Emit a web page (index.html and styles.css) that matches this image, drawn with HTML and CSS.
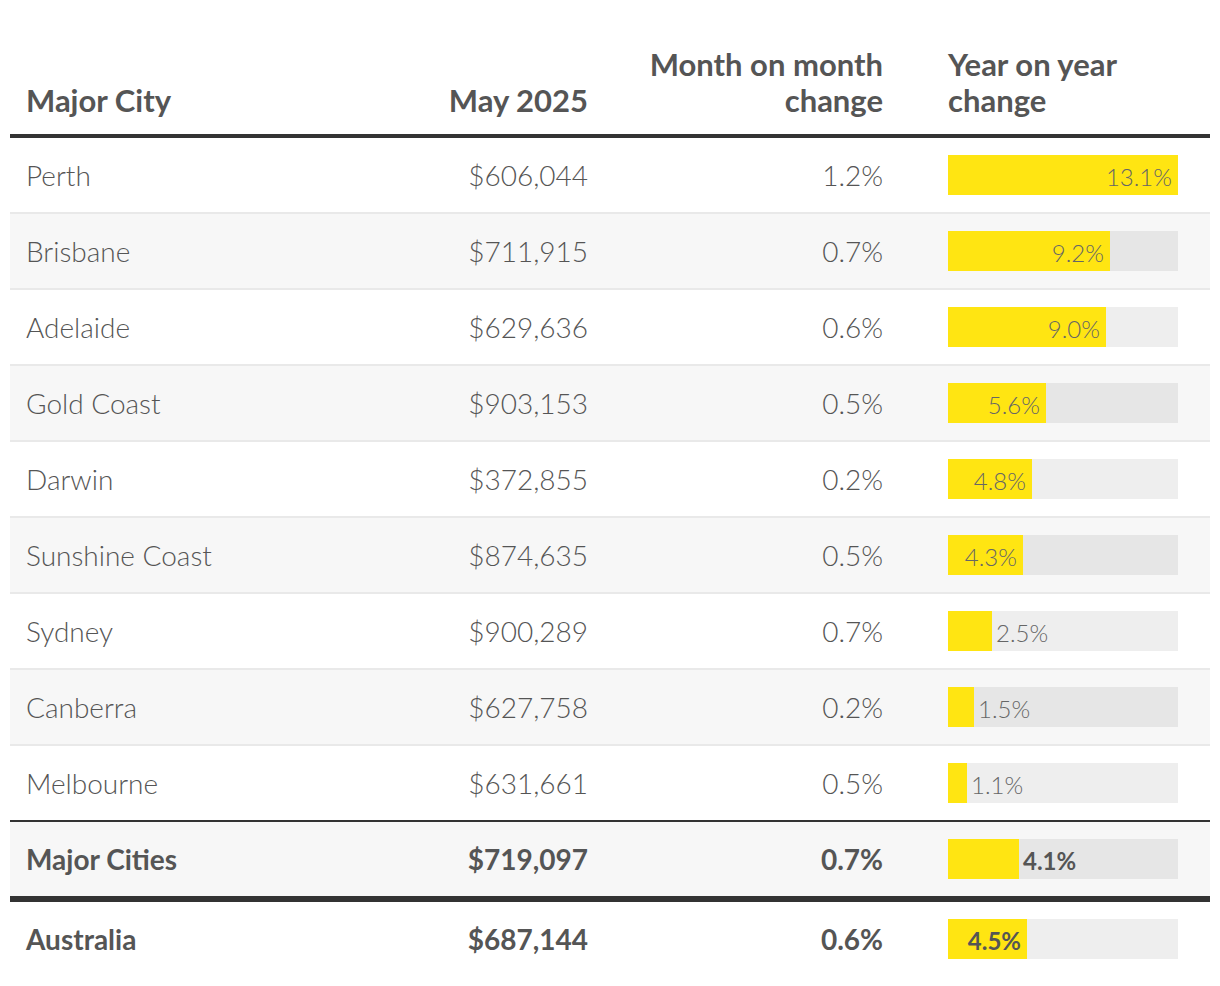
FILE: index.html
```html
<!DOCTYPE html>
<html lang="en">
<head>
<meta charset="utf-8">
<title>Major City prices</title>
<link rel="stylesheet" href="styles.css">
</head>
<body>
<div class="table">
  <div class="row head">
    <div class="c-name">Major City</div>
    <div class="c-num">May 2025</div>
    <div class="c-num">Month on month<br>change</div>
    <div class="c-bar-h">Year on year<br>change</div>
  </div>

  <div class="row">
    <div class="c-name">Perth</div><div class="c-num">$606,044</div><div class="c-num">1.2%</div>
    <div class="c-bar"><div class="track"><div class="fill" style="width:230px"><span class="lbl">13.1%</span></div></div></div>
  </div>
  <div class="row alt">
    <div class="c-name">Brisbane</div><div class="c-num">$711,915</div><div class="c-num">0.7%</div>
    <div class="c-bar"><div class="track"><div class="fill" style="width:162px"><span class="lbl">9.2%</span></div></div></div>
  </div>
  <div class="row">
    <div class="c-name">Adelaide</div><div class="c-num">$629,636</div><div class="c-num">0.6%</div>
    <div class="c-bar"><div class="track"><div class="fill" style="width:158px"><span class="lbl">9.0%</span></div></div></div>
  </div>
  <div class="row alt">
    <div class="c-name">Gold Coast</div><div class="c-num">$903,153</div><div class="c-num">0.5%</div>
    <div class="c-bar"><div class="track"><div class="fill" style="width:98px"><span class="lbl">5.6%</span></div></div></div>
  </div>
  <div class="row">
    <div class="c-name">Darwin</div><div class="c-num">$372,855</div><div class="c-num">0.2%</div>
    <div class="c-bar"><div class="track"><div class="fill" style="width:84px"><span class="lbl">4.8%</span></div></div></div>
  </div>
  <div class="row alt">
    <div class="c-name">Sunshine Coast</div><div class="c-num">$874,635</div><div class="c-num">0.5%</div>
    <div class="c-bar"><div class="track"><div class="fill" style="width:75px"><span class="lbl">4.3%</span></div></div></div>
  </div>
  <div class="row">
    <div class="c-name">Sydney</div><div class="c-num">$900,289</div><div class="c-num">0.7%</div>
    <div class="c-bar"><div class="track"><div class="fill" style="width:44px"></div><span class="lbl out">2.5%</span></div></div>
  </div>
  <div class="row alt">
    <div class="c-name">Canberra</div><div class="c-num">$627,758</div><div class="c-num">0.2%</div>
    <div class="c-bar"><div class="track"><div class="fill" style="width:26px"></div><span class="lbl out">1.5%</span></div></div>
  </div>
  <div class="row last">
    <div class="c-name">Melbourne</div><div class="c-num">$631,661</div><div class="c-num">0.5%</div>
    <div class="c-bar"><div class="track"><div class="fill" style="width:19px"></div><span class="lbl out">1.1%</span></div></div>
  </div>

  <div class="row alt total">
    <div class="c-name">Major Cities</div><div class="c-num">$719,097</div><div class="c-num">0.7%</div>
    <div class="c-bar"><div class="track"><div class="fill" style="width:71px"></div><span class="lbl out">4.1%</span></div></div>
  </div>
  <div class="row total national">
    <div class="c-name">Australia</div><div class="c-num">$687,144</div><div class="c-num">0.6%</div>
    <div class="c-bar"><div class="track"><div class="fill" style="width:79px"><span class="lbl">4.5%</span></div></div></div>
  </div>
</div>
</body>
</html>
```
FILE: styles.css
```css
html, body {
  margin: 0;
  padding: 0;
  background: #ffffff;
}

body {
  font-family: Lato, "Open Sans", "Liberation Sans", sans-serif;
  color: #555555;
}

.table {
  margin: 0 10px;
  padding-top: 46px;
}

.row {
  display: grid;
  grid-template-columns: 300px 261px 295px 295px;
  align-items: center;
  height: 74px;
  padding: 0 32px 0 17px;
  border-bottom: 2px solid #e9e9e9;
  font-size: 28px;
  font-weight: 300;
  line-height: 36px;
}

.row > .c-bar {
  margin-left: 65px;
}

.row.alt {
  background: #f7f7f7;
}

.row.head {
  height: auto;
  align-items: end;
  padding-bottom: 16px;
  border-bottom: 4px solid #333333;
  font-size: 31px;
  font-weight: 700;
  line-height: 36px;
}

.row.last {
  border-bottom: 2px solid #333333;
}

.row.total {
  font-weight: 700;
}

.row.total.alt {
  border-bottom: 6px solid #333333;
}

.row.national {
  border-bottom: none;
}

.c-name {
  text-align: left;
  margin-left: -1px;
}

.c-num {
  text-align: right;
}

.c-bar-h {
  margin-left: 65px;
  text-align: left;
}

.track {
  display: flex;
  align-items: center;
  width: 230px;
  height: 40px;
  background: rgba(0, 0, 0, 0.066);
}

.fill {
  display: flex;
  align-items: center;
  justify-content: flex-end;
  height: 40px;
  background: #ffe512;
  flex: none;
}

.lbl {
  font-size: 24px;
  line-height: 40px;
  padding-right: 6px;
  padding-top: 3px;
  color: #666666;
  white-space: nowrap;
}

.lbl.out {
  padding-right: 0;
  padding-left: 4px;
}

.total .lbl {
  color: #555555;
}
```
